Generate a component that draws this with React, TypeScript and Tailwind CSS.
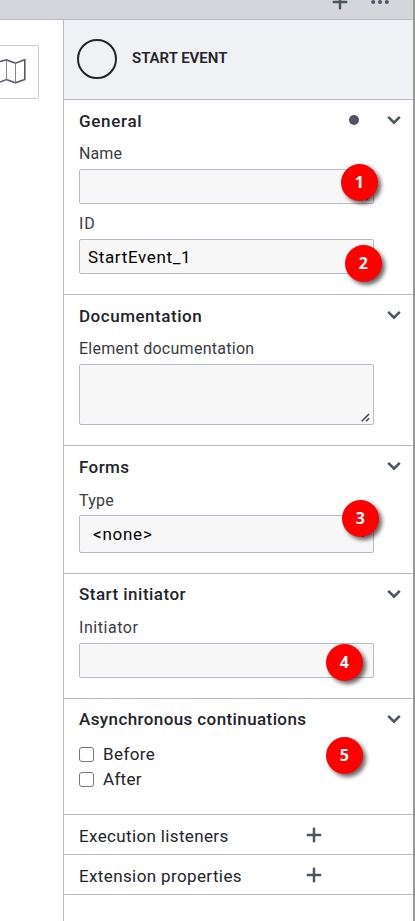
import type { ReactNode } from "react";

function Chevron() {
  return (
    <svg className="mr-3 mb-[2px] shrink-0" width="14" height="10" viewBox="0 0 14 10" fill="none" stroke="#4f5462" strokeWidth="2.6">
      <path d="M1.2 1.9 7 7.6l5.8-5.7" />
    </svg>
  );
}

function Plus({ className = "" }: { className?: string }) {
  return (
    <svg className={className} width="16" height="16" viewBox="0 0 16 16" stroke="#4f5462" strokeWidth="2.5" strokeLinecap="round">
      <path d="M8 1.8v12.4M1.8 8h12.4" />
    </svg>
  );
}

function Grip() {
  return (
    <svg className="absolute right-[3px] bottom-[2px]" width="9" height="9" viewBox="0 0 9 9" stroke="#444" strokeWidth="1.5">
      <path d="M.7 8.3 8 1M5 8.3l3-3" />
    </svg>
  );
}

function Badge({ n, className }: { n: number; className: string }) {
  return (
    <span
      className={
        "absolute z-10 flex h-[36.5px] w-[36.5px] items-center justify-center rounded-full bg-[#fe0000] font-['Open_Sans',sans-serif] text-[16px] font-bold text-white shadow-[3px_3px_4px_rgba(0,0,0,0.6)] " +
        className
      }
    >
      {n}
    </span>
  );
}

function Section({ title, spacing, dot, className, children }: { title: string; spacing: string; dot?: boolean; className: string; children: ReactNode }) {
  return (
    <section className={"border-b border-[#b9b9c8] pl-[15px] " + className}>
      <div className="flex h-[41px] items-center">
        <h2 className={"text-[17px] font-medium whitespace-nowrap text-[#22242a] " + spacing}>{title}</h2>
        <div className="ml-auto flex items-center">
          {dot && <span className="mr-[28px] mb-px h-[10px] w-[10px] rounded-full bg-[#4f5462]" />}
          <Chevron />
        </div>
      </div>
      {children}
    </section>
  );
}

function Field({ label, spacing, box, className = "", children }: { label: string; spacing: string; box: string; className?: string; children?: ReactNode }) {
  return (
    <div className={className}>
      <div className={"flex h-6 items-center pt-[2px] text-[16px] whitespace-nowrap text-[#393b42] " + spacing}>{label}</div>
      <div className={"relative mt-1 flex w-[295px] items-center rounded-[2px] border border-[#b9b9c8] bg-[#f7f7f8] text-[17px] text-black " + box}>
        {children}
      </div>
    </div>
  );
}

function Check({ label, spacing }: { label: string; spacing: string }) {
  return (
    <div className="flex h-[25px] items-center gap-[9px]">
      <span className="h-[15px] w-[15px] rounded-[3px] border border-[#767676] bg-white" />
      <span className={"text-[17px] text-[#22242a] " + spacing}>{label}</span>
    </div>
  );
}

function ListRow({ label, spacing }: { label: string; spacing: string }) {
  return (
    <div className="flex h-10 items-center border-b border-[#b9b9c8] pl-[15px]">
      <span className={"w-[227px] pt-[4px] text-[17px] whitespace-nowrap text-[#22242a] " + spacing}>{label}</span>
      <Plus className="mt-px" />
    </div>
  );
}

export default function App() {
  return (
    <div className="flex h-[921px] w-[415px] overflow-hidden bg-white font-[Roboto,sans-serif]">
      <div className="flex w-[413px] flex-col">
        <div className="flex h-5 shrink-0 items-start border-b border-[#b9b9c2] bg-[#d5d6dc]">
          <Plus className="-mt-[6px] ml-[332px]" />
          <svg className="ml-[22px]" width="20" height="6" viewBox="0 0 20 6" fill="#4f5462">
            <circle cx="3.2" cy="2" r="2" />
            <circle cx="10" cy="2" r="2" />
            <circle cx="16.8" cy="2" r="2" />
          </svg>
        </div>
        <div className="flex flex-1">
          <div className="w-[63px] pt-[25px]">
            <div className="flex h-[54px] w-[39px] items-center justify-end rounded-r-[2px] border border-l-0 border-[#cccccc] pr-3">
              <svg width="26" height="26" viewBox="0 0 26 26" fill="none" stroke="#555b68" strokeWidth="1.6">
                <path d="M-1 2.8 6.5.9l9 3.3 9.3-3.5v19.8l-9.3 3.3-9-3.3-7.5 2.9" />
                <path d="M6.5 1v19.5M15.5 4.2v19.6" stroke="#8c8496" strokeWidth="1" />
              </svg>
            </div>
          </div>
          <div className="w-[350px] border-l border-[#b9b9c8]">
            <header className="flex h-20 items-center border-b border-[#b9b9c8] bg-[#f0f1f4] pl-[13px]">
              <svg className="-mt-px" width="40" height="40" viewBox="0 0 40 40" fill="none" stroke="#22242a" strokeWidth="2">
                <circle cx="20" cy="20" r="19" />
              </svg>
              <span className="-mt-[3px] ml-[15px] text-[15px] font-semibold tracking-[-0.02px] text-[#22242a]">START EVENT</span>
            </header>
            <Section title="General" spacing="pt-[2px] tracking-[0.7px]" dot className="h-[195px]">
              <Field label="Name" spacing="tracking-[0.1px]" box="h-[35px]">
                <Grip />
                <Badge n={1} className="top-[-6px] left-[261px]" />
              </Field>
              <Field label="ID" spacing="tracking-[0.8px]" box="h-[35px] pl-2" className="pt-[7px]">
                <span className="pt-[2px] tracking-[0.65px]">StartEvent_1</span>
                <Badge n={2} className="top-[5px] left-[265px]" />
              </Field>
            </Section>
            <Section title="Documentation" spacing="pt-[2px] tracking-[0.52px]" className="h-[151px]">
              <Field label="Element documentation" spacing="tracking-[0.27px]" box="h-[61px]">
                <Grip />
              </Field>
            </Section>
            <Section title="Forms" spacing="pt-[2px] tracking-[0.4px]" className="h-[128px]">
              <Field label="Type" spacing="translate-y-px tracking-[0.2px]" box="h-[38px] pl-[13px]">
                <span className="pt-[2px] tracking-[0.75px]">&lt;none&gt;</span>
                <svg className="absolute top-[14px] right-[5px]" width="10" height="8" viewBox="0 0 10 8" fill="none" stroke="#222" strokeWidth="2">
                  <path d="m1 1 4 5 4-5" />
                </svg>
                <Badge n={3} className="top-[-16px] left-[262px]" />
              </Field>
            </Section>
            <Section title="Start initiator" spacing="tracking-[0.48px]" className="h-[125px]">
              <Field label="Initiator" spacing="tracking-[0.55px]" box="h-[35px]">
                <Badge n={4} className="top-[0px] left-[246px]" />
              </Field>
            </Section>
            <Section title="Asynchronous continuations" spacing="tracking-[0.4px]" className="h-[116px]">
              <div className="relative pt-[2px]">
                <Check label="Before" spacing="tracking-[0.4px]" />
                <Check label="After" spacing="tracking-[0.3px]" />
                <Badge n={5} className="top-[-3px] left-[247px]" />
              </div>
            </Section>
            <ListRow label="Execution listeners" spacing="tracking-[0.36px]" />
            <ListRow label="Extension properties" spacing="tracking-[0.38px]" />
          </div>
        </div>
      </div>
      <div className="w-[2px] bg-[#999999]" />
    </div>
  );
}
